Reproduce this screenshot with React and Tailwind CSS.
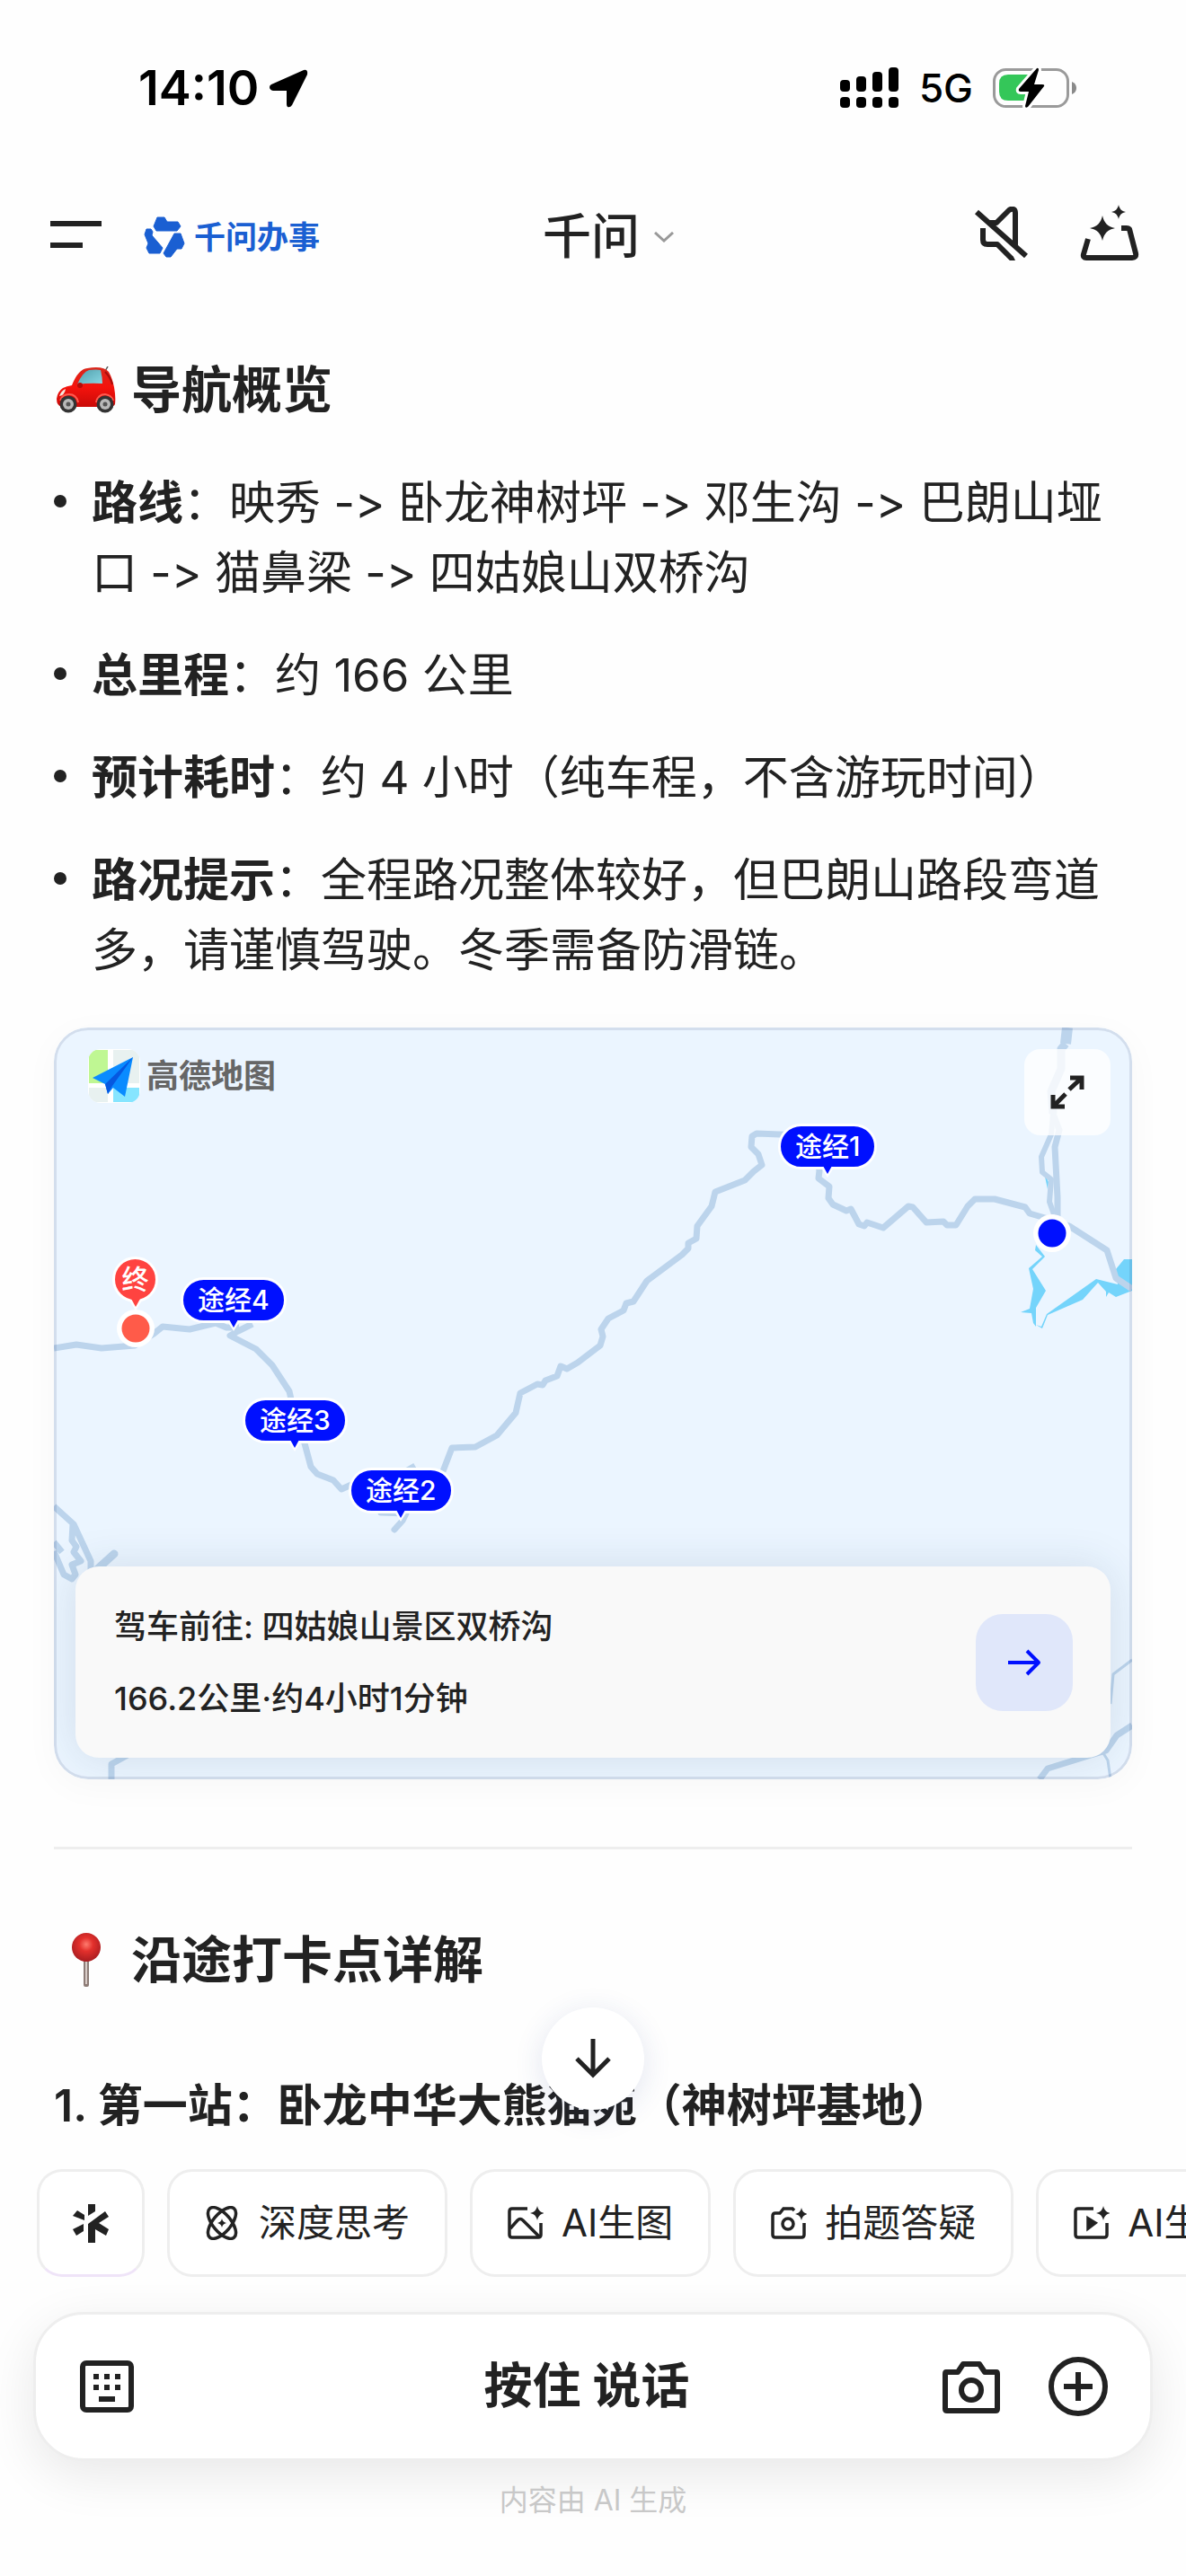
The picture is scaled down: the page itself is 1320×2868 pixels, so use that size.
import { clsx } from 'clsx';

const BRAND_BLUE = '#1a5fd2';

const routeNotes = [
  { label: '路线', text: '映秀 -> 卧龙神树坪 -> 邓生沟 -> 巴朗山垭口 -> 猫鼻梁 -> 四姑娘山双桥沟' },
  { label: '总里程', text: '约 166 公里' },
  { label: '预计耗时', text: '约 4 小时（纯车程，不含游玩时间）' },
  { label: '路况提示', text: '全程路况整体较好，但巴朗山路段弯道多，请谨慎驾驶。冬季需备防滑链。' },
];

// left/top of each label on the map canvas
const waypoints = [
  { name: '途经1', position: 'left-[806px] top-[107px]' },
  { name: '途经2', position: 'left-[328px] top-[490px]' },
  { name: '途经3', position: 'left-[210px] top-[412px]' },
  { name: '途经4', position: 'left-[141px] top-[278px]' },
];

const Sparkle = ({ x, y, r }) => (
  <path
    transform={`translate(${x} ${y}) scale(${r})`}
    d="M0 -1 C.14 -.4 .4 -.14 1 0 C.4 .14 .14 .4 0 1 C-.14 .4 -.4 .14 -1 0 C-.4 -.14 -.14 -.4 0 -1Z"
    fill="currentColor"
    stroke="none"
  />
);

const LocationIcon = () => (
  <svg width="43" height="43" viewBox="0 0 43 43" aria-hidden="true">
    <path d="M38 1 Q43 0 42 6 L25 40 Q23 43 20 42 Q19 41 19 39 V24 H4 Q0 23 0 20 Q0 18 2 17Z" fill="#000" />
  </svg>
);

const SignalIcon = () => (
  <svg width="66" height="46" viewBox="0 0 66 46" aria-hidden="true">
    <rect x="0" y="14" width="11" height="13" rx="4" />
    <rect x="18" y="10" width="11" height="17" rx="4" />
    <rect x="36" y="5" width="11" height="22" rx="4" />
    <rect x="54" y="0" width="11" height="27" rx="4" />
    <rect x="0" y="33" width="11" height="12" rx="4" />
    <rect x="18" y="33" width="11" height="12" rx="4" />
    <rect x="36" y="33" width="11" height="12" rx="4" />
    <rect x="54" y="33" width="11" height="12" rx="4" />
  </svg>
);

const BatteryIcon = () => (
  <svg width="94" height="46" viewBox="0 0 94 46" aria-hidden="true">
    <rect x="1.5" y="2.5" width="82" height="41" rx="13" fill="none" stroke="#9a9a9a" strokeWidth="3" />
    <path d="M88 16 Q93 18 93 23 Q93 28 88 30Z" fill="#8a8a8a" />
    <path d="M17 8 H42 V37 H17 Q7 37 7 27 V18 Q7 8 17 8Z" fill="#34c759" />
    <path
      d="M49 1 L29 24 Q28 27 31 27 H40 L36 43 Q36 46 39 44 L57 21 Q58 19 55 19 H46 L51 3 Q51 0 49 1Z"
      fill="#000"
      stroke="#fff"
      strokeWidth="6"
      paintOrder="stroke"
    />
  </svg>
);

const BrandMark = () => (
  <svg width="46" height="46" viewBox="0 0 46 46" fill={BRAND_BLUE} stroke={BRAND_BLUE} strokeWidth="1" strokeLinejoin="round" aria-hidden="true">
    <path d="M15 1 H23 L26 6 H38 L41 11 L37 16 H14 L11 11Z" />
    <path d="M3 14 H8 L10 17 L9 21 L21 35 L18 41 H6 L3 35 L5 30 L1 20Z" />
    <path d="M34 19 H41 L45 30 L42 36 H37 L30 45 H25 L22 41Z" />
  </svg>
);

const MuteIcon = () => (
  <svg width="60" height="60" viewBox="0 0 60 60" fill="none" stroke="currentColor" strokeWidth="6" strokeLinejoin="round" aria-hidden="true">
    <path d="M2 6 L57 55" />
    <path d="M14 18 H24 L38 4 Q41 2 43 3 Q45 4 45 7 V43" />
    <path d="M9 24 V37 Q9 42 14 42 H25 L40 57 Q42 59 44 58" />
  </svg>
);

const NewChatIcon = () => (
  <svg width="66" height="64" viewBox="0 0 66 64" fill="none" stroke="currentColor" strokeWidth="6" strokeLinejoin="round" aria-hidden="true">
    <path d="M9 38 L4 55 Q3 59 7 59 H58 Q63 59 62 54 L55 27 Q54 26 52 26 H46" />
    <Sparkle x={25} y={26} r={14} />
    <Sparkle x={43} y={8} r={8} />
  </svg>
);

const CarIcon = () => (
  <svg width="66" height="52" viewBox="0 0 66 52" aria-hidden="true">
    <defs>
      <linearGradient id="carBody" x1="0" y1="0" x2="0" y2="1">
        <stop offset="0" stopColor="#d9281c" />
        <stop offset=".5" stopColor="#f5130d" />
        <stop offset="1" stopColor="#c90a08" />
      </linearGradient>
      <linearGradient id="carGlass" x1="0" y1="0" x2="1" y2="1">
        <stop offset="0" stopColor="#4f9fac" />
        <stop offset="1" stopColor="#8bd8e4" />
      </linearGradient>
    </defs>
    <path d="M53 7 L57 0" stroke="#555" strokeWidth="1.5" />
    <path d="M17 21 Q24 3 34 2 Q52 -1 58 6 Q62 13 64 23 Q66 34 65 42 Q64 45 58 45 H6 Q0 44 0 36 Q1 28 7 24 Q11 22 17 21Z" fill="url(#carBody)" />
    <path d="M23 20 Q29 6 36 4 Q44 3 49 4 Q51 12 51 19 Q35 18 23 20Z" fill="url(#carGlass)" />
    <path d="M54 6 Q60 12 62 20" stroke="#a90d0b" strokeWidth="2" fill="none" />
    <path d="M10 25 Q5 27 3 33 Q9 32 10 25Z" fill="#f6e9dd" />
    <rect x="23" y="18" width="6" height="6" rx="3" fill="#b50c08" />
    <path d="M4 38 Q6 31 14 31 Q22 31 24 40 M44 40 Q46 31 54 31 Q61 32 63 38" stroke="#ff5b50" strokeWidth="2" fill="none" />
    <circle cx="13" cy="42" r="9.5" fill="#333" />
    <circle cx="13" cy="42" r="6" fill="#b9b9b9" />
    <circle cx="13" cy="42" r="2.5" fill="#555" />
    <circle cx="54" cy="42" r="9.5" fill="#333" />
    <circle cx="54" cy="42" r="6" fill="#b9b9b9" />
    <circle cx="54" cy="42" r="2.5" fill="#555" />
  </svg>
);

const PushpinIcon = () => (
  <svg width="66" height="62" viewBox="0 0 66 62" aria-hidden="true">
    <defs>
      <radialGradient id="pinHead" cx=".5" cy=".4" r=".6">
        <stop offset="0" stopColor="#ff7b6e" />
        <stop offset=".4" stopColor="#e3302c" />
        <stop offset="1" stopColor="#a81c20" />
      </radialGradient>
    </defs>
    <rect x="30" y="28" width="6" height="33" rx="2" fill="#8d7c77" />
    <rect x="32" y="30" width="2" height="28" fill="#d9cdc8" />
    <circle cx="33" cy="17" r="16" fill="url(#pinHead)" />
  </svg>
);

const AmapLogo = () => (
  <svg width="58" height="60" viewBox="0 0 58 60" aria-hidden="true">
    <clipPath id="amapClip">
      <rect width="58" height="60" rx="14" />
    </clipPath>
    <g clipPath="url(#amapClip)">
      <rect width="58" height="60" fill="#fff" />
      <rect x="1" y="1" width="21" height="37" fill="#bff793" />
      <rect x="28" y="1" width="29" height="37" fill="#e8f1f0" />
      <rect x="1" y="43" width="21" height="16" fill="#e8f1f0" />
      <rect x="28" y="43" width="29" height="16" fill="#86e5ff" />
    </g>
    <path d="M50 9 L5 32 L19 39 L22 50 L28 43 L41 53Z" fill="#0a8bff" />
    <path d="M50 9 L19 39 L22 50 L27 41Z" fill="#0658e0" />
  </svg>
);

const RouteMap = () => (
  <svg viewBox="0 0 1200 837" className="block w-full bg-[#ebf5ff]" role="img" aria-label="路线地图">
    <g fill="#74d4fb">
      <path d="M1093 242 L1103 255 L1089 269 L1104 293 L1093 312 V333 L1090 329 L1088 318 L1076 317 L1086 313 L1090 291 L1085 268 L1100 255 L1092 248Z" />
      <path d="M1105 319 L1160 280 L1184 286 L1182 269 L1191 258 H1200 V293 L1182 300 L1174 295 L1171 300 V294 L1162 284 L1145 303 L1106 320 L1100 335 L1093 331 L1099 333Z" />
      <path d="M1098 150 L1102 162 L1107 172 L1106 180 L1103 166Z" />
    </g>
    <g fill="none" stroke="#bcd4ec" strokeWidth="7" strokeLinejoin="round">
      <path d="M0 357 L25 353 L53 357 L90 354 L111 341 L121 333 L151 336 L180 329 L192 334 L206 334 M221 330 L205 338 L196 343 L225 358 L243 376 L262 405 L270 440 L279 463 L286 489 L293 497 L311 504 L320 514 L340 505 L390 495 L402 488" />
      <path d="M364 540 L392 541 L388 549 L379 559" strokeLinecap="round" />
      <path d="M433 494 L443 468 L469 467 L493 454 L514 429 L519 407 L538 397 L544 398 L547 393 L560 388 L564 377 L571 380 L583 373 L608 354 L611 344 L609 336 L617 324 L634 315 L637 307 L645 305 L660 282 L699 253 L706 246 V240 L715 235 L716 221 L732 199 L736 183 L769 170 L779 160 L788 153 L784 141 L776 133 L777 121 L782 118 L808 119 L840 120 L852 159 L851 168 L863 177 L862 190 L867 197 L882 204 L887 202 L896 219 L902 221 L905 217 L923 223 L951 199 L956 200 L971 217 L990 216 L994 220 H1004 L1017 199 L1025 191 H1047 L1081 200 L1086 207 L1110 214 L1130 221 L1172 248 L1182 279 L1200 291" />
      <path d="M1128 0 L1126 18" strokeWidth="12" />
      <path d="M1126 18 L1121 24 V46 L1110 71 L1112 96" strokeWidth="9" />
      <path d="M1112 96 L1110 119 L1099 144 L1100 161 L1110 169 L1108 194 L1113 208" strokeWidth="6" />
      <path d="M1112 96 L1119 114 L1114 133 L1117 189 V210" />
      <path d="M0 533 L22 553 L41 594 V605 M21 553 L20 571 L25 578 L22 584 L30 594 L20 598 L24 609 L20 614 L11 609 L0 583 M0 573 L9 584" />
      <path d="M67 586 L46 605" strokeWidth="9" strokeLinecap="round" />
      <path d="M64 837 V820 L84 809" />
      <path d="M1200 704 L1179 720 L1176 753 M1168 808 L1173 816 L1176 837" strokeWidth="3" />
      <path d="M1200 777 L1183 788 L1171 805 L1151 811 L1106 825 L1097 837" />
    </g>
    <circle cx="91" cy="335" r="21" fill="#fff" />
    <circle cx="91" cy="335" r="15.5" fill="#ff5b49" />
    <circle cx="1111" cy="229" r="21" fill="#fff" />
    <circle cx="1111" cy="229" r="15.5" fill="#0010ff" />
  </svg>
);

const PinTail = () => (
  <svg width="18" height="14" viewBox="0 0 18 14" className="-mt-[4px]" aria-hidden="true">
    <path d="M2 2 L9 13 L16 2" fill="#fff" />
    <path d="M4 0 L9 9 L14 0Z" fill="currentColor" />
  </svg>
);

const ThinkIcon = () => (
  <>
    <ellipse cx="19" cy="19" rx="10" ry="21" transform="rotate(-40 19 19)" />
    <ellipse cx="19" cy="19" rx="10" ry="21" transform="rotate(40 19 19)" />
    <Sparkle x={19} y={19} r={5} />
  </>
);

const ImageIcon = () => (
  <>
    <path d="M22 3 H5 Q2 3 2 6 V32 Q2 35 5 35 H34 Q37 35 37 32 V19" />
    <path d="M3 25 L11 16 Q14 13 17 16 L35 34" />
    <Sparkle x={33} y={8} r={8} />
  </>
);

const SnapIcon = () => (
  <>
    <path d="M26 5 L24 3 H14 L10 8 H5 Q2 8 2 11 V32 Q2 35 5 35 H34 Q37 35 37 32 V19" />
    <circle cx="19" cy="20" r="6" />
    <Sparkle x={34} y={9} r={7} />
  </>
);

const VideoIcon = () => (
  <>
    <path d="M22 3 H5 Q2 3 2 6 V32 Q2 35 5 35 H34 Q37 35 37 32 V19" />
    <path d="M16 14 L24 19 L16 25Z" fill="currentColor" />
    <Sparkle x={33} y={8} r={8} />
  </>
);

const tools = [
  { name: '深度思考', Icon: ThinkIcon },
  { name: 'AI生图', Icon: ImageIcon },
  { name: '拍题答疑', Icon: SnapIcon },
  { name: 'AI生视频', Icon: VideoIcon },
];

const StatusBar = () => (
  <div className="flex h-[196px] shrink-0 items-center justify-between pl-[154px] pr-[121px] text-black">
    <div className="flex items-center gap-[12px]">
      <span className="text-[54px] leading-[60px] font-semibold">14:10</span>
      <LocationIcon />
    </div>
    <div className="flex items-center gap-[22px]">
      <SignalIcon />
      <span className="text-[44px] leading-[60px] font-medium">5G</span>
      <BatteryIcon />
    </div>
  </div>
);

const Header = () => (
  <header className="grid h-[136px] shrink-0 grid-cols-[1fr_auto_1fr] items-center px-[52px]">
    <div className="flex items-center gap-[47px] pl-[4px]">
      <button aria-label="菜单" className="flex flex-col gap-[18px] pb-[6px]">
        <span className="h-[6px] w-[57px] bg-[#222]" />
        <span className="h-[6px] w-[36px] bg-[#222]" />
      </button>
      <a href="#tasks" className="flex items-center gap-[10px] text-[#1a5fd2]">
        <BrandMark />
        <span className="text-[35px] leading-[48px] font-bold">千问办事</span>
      </a>
    </div>
    <button className="flex items-center gap-[16px] pl-[34px] text-[54px] leading-[72px] font-medium">
      千问
      <svg width="22" height="12" viewBox="0 0 22 12" fill="none" stroke="#999" strokeWidth="3" aria-hidden="true">
        <path d="M1 1 L11 10 L21 1" />
      </svg>
    </button>
    <div className="flex items-center justify-end gap-[57px] pb-[8px]">
      <button aria-label="静音"><MuteIcon /></button>
      <button aria-label="新对话"><NewChatIcon /></button>
    </div>
  </header>
);

const MapCard = () => (
  <section className="relative mt-[47px] overflow-hidden rounded-[38px] shadow-[0_8px_40px_rgba(0,0,0,0.03)]">
    <RouteMap />

    <div className="absolute top-[24px] left-[38px] flex items-center gap-[7px]">
      <AmapLogo />
      <span className="text-[36px] leading-[48px] font-bold text-[#666]">高德地图</span>
    </div>

    <button aria-label="全屏" className="absolute top-[24px] right-[24px] flex size-[96px] items-center justify-center rounded-[18px] bg-white/80">
      <svg width="38" height="38" viewBox="0 0 38 38" fill="none" stroke="currentColor" strokeWidth="5" aria-hidden="true">
        <path d="M22 3 H35 V16 M35 3 L21 16" />
        <path d="M16 35 H3 V22 M3 35 L17 21" />
      </svg>
    </button>

    <div className="absolute top-[255px] left-[65px] flex flex-col items-center text-[#ff4340]">
      <span className="flex size-[51px] items-center justify-center rounded-full border-[3px] border-white bg-[#ff4340] text-[30px] font-medium text-white">终</span>
      <PinTail />
    </div>

    {waypoints.map((point) => (
      <div key={point.name} className={clsx('absolute flex flex-col items-center text-[#0010ff]', point.position)}>
        <span className="flex h-[51px] items-center justify-center rounded-full border-[3px] border-white bg-[#0010ff] px-[16px] text-[30px] font-medium text-white">
          {point.name}
        </span>
        <PinTail />
      </div>
    ))}

    <div className="absolute inset-x-[24px] bottom-[24px] flex h-[213px] items-center justify-between rounded-[26px] bg-[#f9f9f9] pr-[42px] pl-[43px] shadow-[0_0_48px_rgba(30,60,90,0.13)]">
      <div className="flex flex-col gap-[32px] text-[36px] leading-[48px] font-medium">
        <p>驾车前往: 四姑娘山景区双桥沟</p>
        <p>166.2公里·约4小时1分钟</p>
      </div>
      <button aria-label="开始导航" className="flex size-[108px] items-center justify-center rounded-[30px] bg-[#e0e7fa] text-[#0010ff]">
        <svg width="38" height="30" viewBox="0 0 38 30" fill="none" stroke="currentColor" strokeWidth="4" aria-hidden="true">
          <path d="M1 15 H35 M22 2 L35 15 L22 28" strokeLinejoin="round" />
        </svg>
      </button>
    </div>

    <div className="pointer-events-none absolute inset-0 rounded-[38px] border-[3px] border-[#14285a]/11" />
  </section>
);

const Answer = () => (
  <main className="min-h-0 flex-1 overflow-hidden px-[60px] pt-[66px]">
    <h2 className="flex items-center gap-[17px] pl-[3px] text-[56px] leading-[72px] font-semibold">
      <CarIcon />
      导航概览
    </h2>
    <ul className="mt-[51px] flex flex-col gap-[36px] text-[51px] leading-[78px] [font-variant-ligatures:none]">
      {routeNotes.map((note) => (
        <li key={note.label} className="flex gap-[28px]">
          <span className="mt-[30px] size-[14px] shrink-0 rounded-full bg-[#222]" />
          <p>
            <strong className="font-semibold">{note.label}</strong>：{note.text}
          </p>
        </li>
      ))}
    </ul>
    <MapCard />
    <hr className="mt-[75px] border-t-[3px] border-[#eee]" />
    <h2 className="mt-[87px] flex items-center gap-[17px] pl-[3px] text-[56px] leading-[72px] font-semibold">
      <PushpinIcon />
      沿途打卡点详解
    </h2>
    <h3 className="mt-[87px] text-[50px] leading-[78px] font-semibold whitespace-nowrap">
      1. 第一站：卧龙中华大熊猫苑（神树坪基地）
    </h3>
  </main>
);

const Composer = () => (
  <footer className="relative shrink-0 pb-[64px]">
    <button aria-label="回到底部" className="absolute -top-[180px] left-1/2 flex size-[114px] -translate-x-1/2 items-center justify-center rounded-full bg-white shadow-[0_6px_32px_rgba(40,60,140,0.13)]">
      <svg width="42" height="44" viewBox="0 0 42 44" fill="none" stroke="currentColor" strokeWidth="5" aria-hidden="true">
        <path d="M21 0 V40 M3 22 L21 40 L39 22" />
      </svg>
    </button>

    <div className="flex gap-[25px] overflow-hidden pl-[41px]">
      <button aria-label="全部功能" className="flex size-[120px] shrink-0 items-center justify-center rounded-[28px] border-[3px] border-[#eee] border-b-[#efe4f8] bg-white">
        <svg width="41" height="45" viewBox="0 0 41 45" fill="currentColor" aria-hidden="true">
          <path d="M17 1 H25 V9 L17 14Z" />
          <path d="M5 8 L13 13 V19 L0 14Z" />
          <path d="M0 29 L12 23 V31 L4 36Z" />
          <path d="M17 23 L36 9 L40 15 L29 22 L40 29 L37 36 L25 29 V44 H17Z" />
        </svg>
      </button>
      {tools.map(({ name, Icon }) => (
        <button key={name} className="flex h-[120px] shrink-0 items-center gap-[20px] rounded-[28px] border-[3px] border-[#eee] bg-white px-[39px] text-[42px] leading-[60px]">
          <svg width="40" height="38" viewBox="0 0 40 38" fill="none" stroke="currentColor" strokeWidth="3.5" aria-hidden="true">
            <Icon />
          </svg>
          {name}
        </button>
      ))}
    </div>

    <div className="mx-[37px] mt-[39px] flex h-[166px] items-center justify-between rounded-[56px] border-[3px] border-[#eee] bg-white px-[47px] shadow-[0_16px_56px_rgba(0,0,0,0.09)]">
      <button aria-label="键盘输入" className="flex w-[172px]">
        <svg width="64" height="60" viewBox="0 0 64 60" aria-hidden="true">
          <rect x="5" y="4" width="54" height="52" rx="4" fill="none" stroke="currentColor" strokeWidth="6" />
          <g fill="currentColor">
            <rect x="17" y="16" width="6" height="6" />
            <rect x="29" y="16" width="6" height="6" />
            <rect x="41" y="16" width="6" height="6" />
            <rect x="17" y="28" width="6" height="6" />
            <rect x="29" y="28" width="6" height="6" />
            <rect x="41" y="28" width="6" height="6" />
            <rect x="23" y="41" width="18" height="6" />
          </g>
        </svg>
      </button>
      <button className="text-[54px] leading-[72px] font-bold">按住 说话</button>
      <div className="flex w-[186px] items-center justify-end gap-[53px]">
        <button aria-label="拍照">
          <svg width="66" height="62" viewBox="0 0 66 62" fill="none" stroke="currentColor" strokeWidth="6" strokeLinejoin="round" aria-hidden="true">
            <path d="M5 15 H18 L24 6 H42 L48 15 H61 Q62 15 62 17 V56 Q62 58 60 58 H6 Q4 58 4 56 V17 Q4 15 5 15Z" />
            <circle cx="33" cy="35" r="11" />
          </svg>
        </button>
        <button aria-label="更多">
          <svg width="66" height="66" viewBox="0 0 66 66" fill="none" stroke="currentColor" strokeWidth="6" aria-hidden="true">
            <circle cx="33" cy="33" r="30" />
            <path d="M33 17 V49 M17 33 H49" />
          </svg>
        </button>
      </div>
    </div>

    <p className="mt-[24px] text-center text-[32px] leading-[40px] text-[#c8c8c8]">内容由 AI 生成</p>
  </footer>
);

const App = () => (
  <div
    lang="zh-CN"
    className="flex h-screen flex-col overflow-hidden bg-[#fefefe] font-['Inter','Noto_Sans_CJK_SC',sans-serif] text-[#222]"
  >
    <StatusBar />
    <Header />
    <Answer />
    <Composer />
  </div>
);

export default App;
